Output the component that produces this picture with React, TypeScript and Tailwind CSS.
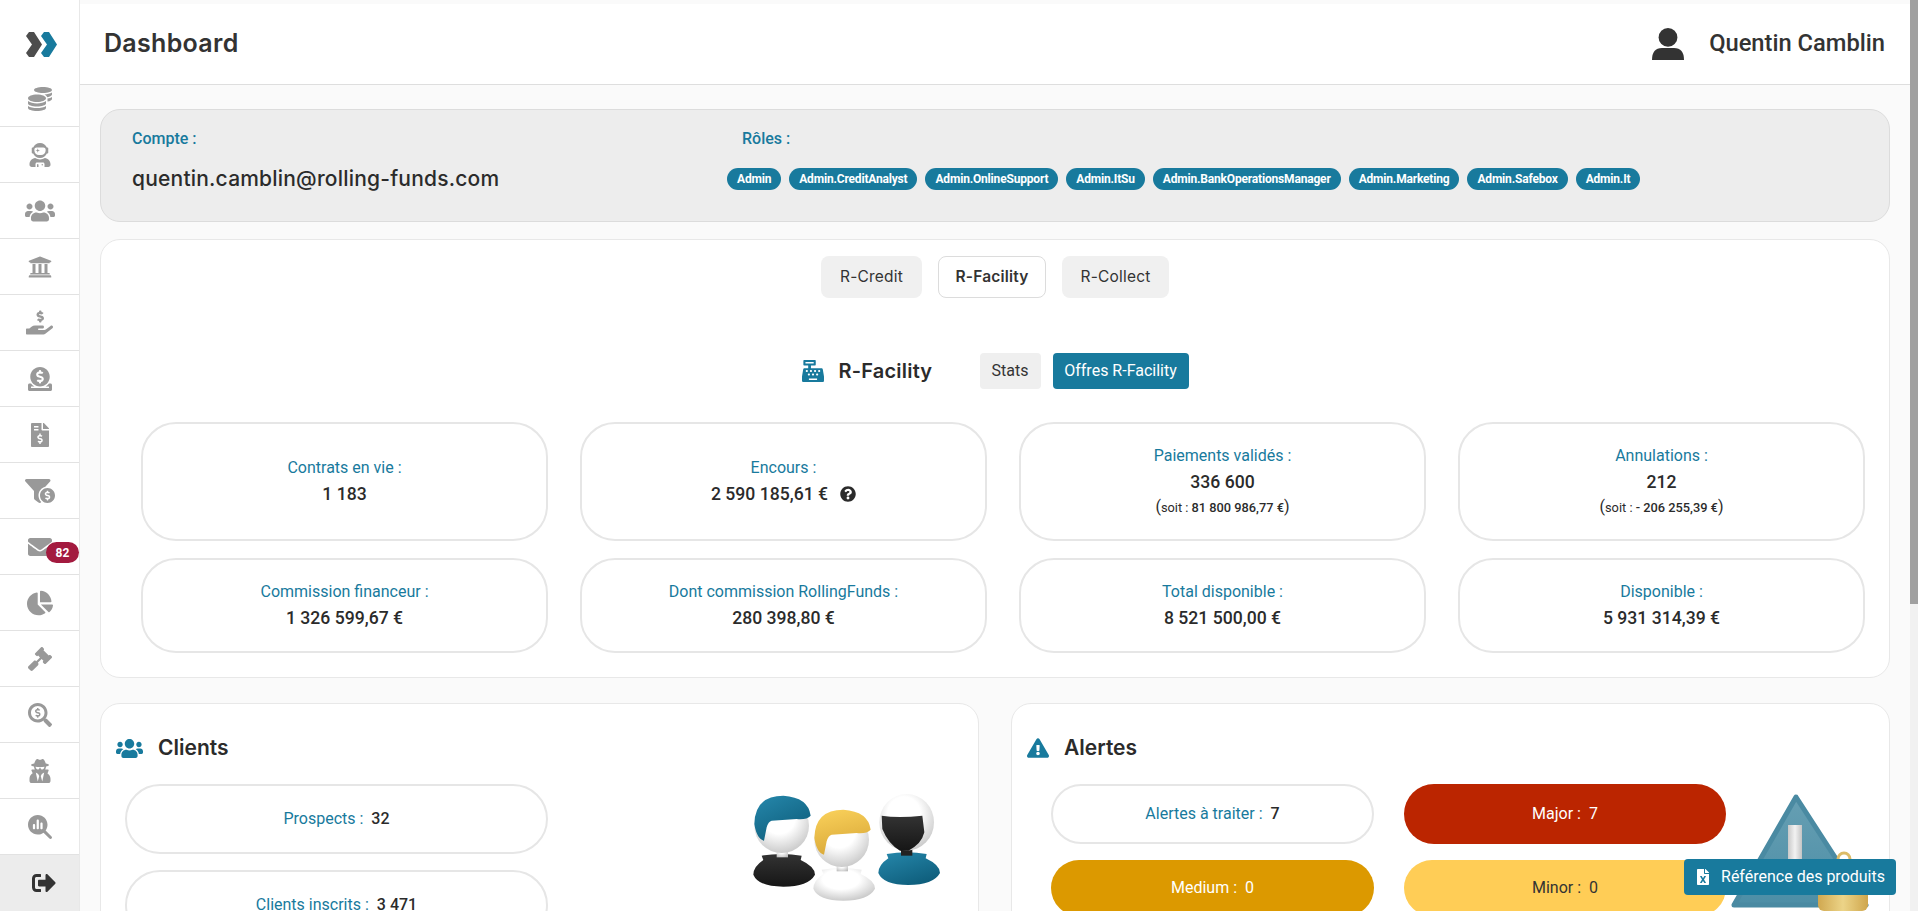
import type { ReactNode } from "react"
import {
  FaCoins,
  FaUserAstronaut,
  FaUsers,
  FaUniversity,
  FaHandHoldingUsd,
  FaDonate,
  FaFileInvoiceDollar,
  FaFunnelDollar,
  FaEnvelope,
  FaChartPie,
  FaGavel,
  FaSearchDollar,
  FaUserSecret,
  FaSignOutAlt,
  FaCashRegister,
  FaQuestionCircle,
  FaExclamationTriangle,
  FaFileExcel,
} from "react-icons/fa"
import { FaMagnifyingGlassChart } from "react-icons/fa6"

const roles = [
  "Admin",
  "Admin.CreditAnalyst",
  "Admin.OnlineSupport",
  "Admin.ItSu",
  "Admin.BankOperationsManager",
  "Admin.Marketing",
  "Admin.Safebox",
  "Admin.It",
]

const navItems = [
  { Icon: FaUserAstronaut, size: 24 },
  { Icon: FaUsers, size: 30 },
  { Icon: FaUniversity, size: 24 },
  { Icon: FaHandHoldingUsd, size: 27 },
  { Icon: FaDonate, size: 24 },
  { Icon: FaFileInvoiceDollar, size: 24 },
  { Icon: FaFunnelDollar, size: 30 },
  { Icon: FaEnvelope, size: 24 },
  { Icon: FaChartPie, size: 26 },
  { Icon: FaGavel, size: 24 },
  { Icon: FaSearchDollar, size: 24 },
  { Icon: FaUserSecret, size: 24 },
  { Icon: FaMagnifyingGlassChart, size: 24 },
]

function Logo() {
  return (
    <svg width="31" height="25" viewBox="0 0 31 25">
      <path d="M3 0 L8 0 L16 12.5 L8 25 L3 25 L0 21 L6 12.5 L0 4 Z" fill="#4d4d4d" />
      <path d="M18 0 L23 0 L31 12.5 L23 25 L18 25 L15 21 L21 12.5 L15 4 Z" fill="#187a9d" />
    </svg>
  )
}

function Sidebar() {
  return (
    <aside className="w-[80px] shrink-0 h-screen flex flex-col bg-white border-r border-[#e8e8e8]">
      <div className="h-[72px] shrink-0 flex items-center justify-center pt-4 pl-1">
        <Logo />
      </div>
      <div className="h-[55px] shrink-0 flex items-center justify-center border-b border-[#e2e2e2] text-[#999]">
        <FaCoins size={24} />
      </div>
      {navItems.map(({ Icon, size }, i) => (
        <div key={i} className="relative h-[56px] shrink-0 flex items-center justify-center border-b border-[#e2e2e2] text-[#999]">
          <Icon size={size} />
          {Icon === FaEnvelope && (
            <span className="absolute left-[46px] top-[23px] w-[33px] h-[21px] rounded-full bg-[#a31a3f] text-white text-xs font-bold flex items-center justify-center">
              82
            </span>
          )}
        </div>
      ))}
      <div className="flex-1 flex items-center justify-center bg-[#ececec] text-[#333] pl-2">
        <FaSignOutAlt size={24} />
      </div>
    </aside>
  )
}

function UserIcon() {
  return (
    <svg width="32" height="32" viewBox="0 0 32 32" fill="#333">
      <circle cx="16" cy="9.4" r="9.4" />
      <path d="M0 32 Q0 20 10 20 H22 Q32 20 32 32 Z" />
    </svg>
  )
}

function Header() {
  return (
    <header className="h-[81px] bg-white border-b border-[#dedede] flex items-center justify-between pl-6 pr-[25px]">
      <h1 className="font-['Inter'] font-semibold text-[25px] tracking-[0.3px] text-[#333]">Dashboard</h1>
      <div className="flex items-center gap-[25px] text-[#333]">
        <UserIcon />
        <span className="text-[23.7px] font-medium">Quentin Camblin</span>
      </div>
    </header>
  )
}

function AccountCard() {
  return (
    <section className="h-[113px] rounded-[20px] bg-[#ededed] border border-[#dcdcdc] flex pl-[31px] pt-[19px]">
      <div className="w-[595px]">
        <div className="text-base font-medium text-[#187a9d] h-5 leading-5">Compte :</div>
        <div className="mt-[18px] font-['Inter'] font-medium text-[21px] tracking-[0.2px] text-[#2b2b2b] leading-6">
          quentin.camblin@rolling-funds.com
        </div>
      </div>
      <div>
        <div className="pl-[15px] text-base font-medium text-[#187a9d] h-5 leading-5">Rôles :</div>
        <div className="mt-[19px] flex gap-2">
          {roles.map((r) => (
            <span key={r} className="h-[22px] px-[10px] rounded-full bg-[#187a9d] text-white text-xs font-bold tracking-[-0.18px] leading-[22px]">
              {r}
            </span>
          ))}
        </div>
      </div>
    </section>
  )
}

function StatCard({ label, value, sub, help }: { label: string; value: string; sub?: string; help?: boolean }) {
  return (
    <div className={`rounded-[35px] border-2 border-[#e6e6e6] bg-white flex flex-col items-center justify-center text-center ${sub ? "" : "pb-[2px]"}`}>
      <div className="text-base leading-[26px] text-[#187a9d]">{label}</div>
      <div className="text-[17.6px] leading-[26px] font-medium text-[#2b2b2b] flex items-center gap-3">
        {value}
        {help && <FaQuestionCircle size={16} />}
      </div>
      {sub && (
        <div className="text-[12.8px] leading-[26px] text-[#2b2b2b]">
          <span className="text-base">(</span>soit : <span className="font-medium">{sub}</span>
          <span className="text-base">)</span>
        </div>
      )}
    </div>
  )
}

function FacilityCard() {
  return (
    <section className="rounded-[20px] bg-white border border-[#e8e8e8] pt-4 pb-6 pl-10 pr-6">
      <div className="flex justify-center gap-4 text-[15.5px] tracking-[0.2px] font-['Inter'] text-[#333] -ml-4">
        <button className="w-[101px] h-[42px] rounded-lg bg-[#f0f0f0]">R-Credit</button>
        <button className="w-[108px] h-[42px] rounded-lg bg-white border border-[#dcdcdc] font-semibold">R-Facility</button>
        <button className="w-[107px] h-[42px] rounded-lg bg-[#f0f0f0]">R-Collect</button>
      </div>
      <div className="mt-[55px] h-9 flex items-center justify-center -ml-4">
        <FaCashRegister size={22} className="text-[#187a9d]" />
        <h2 className="ml-[15px] w-[141px] font-['Inter'] font-semibold text-[20px] tracking-[0.2px] text-[#2b2b2b]">R-Facility</h2>
        <button className="w-[61px] h-9 rounded bg-[#efefef] text-base text-[#333]">Stats</button>
        <button className="ml-3 w-[136px] h-9 rounded bg-[#187a9d] text-base text-white">Offres R-Facility</button>
      </div>
      <div className="mt-[33px] grid grid-cols-4 grid-rows-[119px_95px] gap-x-8 gap-y-[17px]">
        <StatCard label="Contrats en vie :" value="1 183" />
        <StatCard label="Encours :" value="2 590 185,61 €" help />
        <StatCard label="Paiements validés :" value="336 600" sub="81 800 986,77 €" />
        <StatCard label="Annulations :" value="212" sub="- 206 255,39 €" />
        <StatCard label="Commission financeur :" value="1 326 599,67 €" />
        <StatCard label="Dont commission RollingFunds :" value="280 398,80 €" />
        <StatCard label="Total disponible :" value="8 521 500,00 €" />
        <StatCard label="Disponible :" value="5 931 314,39 €" />
      </div>
    </section>
  )
}

function Panel({ icon, title, children }: { icon: ReactNode; title: string; children: ReactNode }) {
  return (
    <section className="rounded-[20px] bg-white border border-[#e8e8e8] pt-8 pl-[15px] min-h-[400px]">
      <div className="h-6 mb-6 flex items-center gap-[15px]">
        <span className="text-[#187a9d]">{icon}</span>
        <h2 className="font-['Inter'] font-semibold text-[21px] text-[#2b2b2b]">{title}</h2>
      </div>
      {children}
    </section>
  )
}

function ClientPill({ label, value }: { label: string; value: string }) {
  return (
    <div className="h-[70px] rounded-full border-2 border-[#e6e6e6] bg-white flex items-center justify-center gap-2 text-base">
      <span className="text-[#187a9d]">{label}</span>
      <span className="font-medium text-[#2b2b2b]">{value}</span>
    </div>
  )
}

// hand drawn stand-in for the 3D busts picture
function Busts() {
  const hairFront = "M43 120 Q45 35 130 35 Q205 40 212 95 Q200 108 170 105 L95 110 Q85 112 80 130 L72 170 Q50 165 43 120Z"
  const body = "M70 228 L65 215 Q125 205 185 215 L182 228 Q225 248 225 272 Q205 308 130 308 Q55 308 40 272 Q40 248 70 228Z"
  return (
    <svg width="210" height="126" viewBox="0 0 630 378" className="shrink-0">
      <defs>
        <radialGradient id="w" cx="0.45" cy="0.35" r="0.75">
          <stop offset="0.4" stopColor="#ffffff" />
          <stop offset="1" stopColor="#bdbdbd" />
        </radialGradient>
        <linearGradient id="blue" x1="0" y1="0" x2="0.6" y2="1">
          <stop offset="0" stopColor="#2688ac" />
          <stop offset="1" stopColor="#0f5f7d" />
        </linearGradient>
        <linearGradient id="yellow" x1="0.2" y1="0" x2="0.5" y2="1">
          <stop offset="0" stopColor="#f9d05a" />
          <stop offset="1" stopColor="#d9a838" />
        </linearGradient>
        <linearGradient id="black" x1="0" y1="0" x2="0" y2="1">
          <stop offset="0" stopColor="#333333" />
          <stop offset="1" stopColor="#161616" />
        </linearGradient>
      </defs>
      <g>
        <path d={body} fill="url(#black)" />
        <rect x="110" y="185" width="34" height="35" fill="url(#w)" />
        <ellipse cx="125" cy="125" rx="82" ry="82" fill="url(#w)" />
        <path d={hairFront} fill="url(#blue)" />
      </g>
      <g transform="translate(375 -5)">
        <path d={body} fill="url(#blue)" />
        <rect x="108" y="185" width="34" height="35" fill="#222" />
        <ellipse cx="125" cy="120" rx="82" ry="85" fill="url(#w)" />
        <path d="M50 100 Q100 108 172 100 L178 150 Q170 185 130 205 L105 205 Q70 185 52 140Z" fill="url(#black)" />
      </g>
      <g transform="translate(180 42)">
        <path d={body} fill="url(#w)" />
        <rect x="110" y="185" width="34" height="35" fill="url(#w)" />
        <ellipse cx="125" cy="125" rx="82" ry="82" fill="url(#w)" />
        <path d={hairFront} fill="url(#yellow)" />
      </g>
    </svg>
  )
}

// hand drawn stand-in for the warning sign picture
function WarningArt() {
  return (
    <svg width="140" height="118" viewBox="0 0 140 118" className="shrink-0 mt-[9px] ml-1">
      <defs>
        <linearGradient id="tri" x1="0" y1="0" x2="0" y2="1">
          <stop offset="0" stopColor="#669fb3" />
          <stop offset="1" stopColor="#4d8ea6" />
        </linearGradient>
        <linearGradient id="bar" x1="0" y1="0" x2="1" y2="0">
          <stop offset="0" stopColor="#c9c9c9" />
          <stop offset="0.5" stopColor="#f2f2f2" />
          <stop offset="1" stopColor="#c4c4c4" />
        </linearGradient>
        <linearGradient id="bell" x1="0" y1="0" x2="1" y2="0">
          <stop offset="0" stopColor="#d0a850" />
          <stop offset="0.5" stopColor="#ecd488" />
          <stop offset="1" stopColor="#cfa64c" />
        </linearGradient>
      </defs>
      <path d="M66 4 L136 112 L4 112 Z" fill="url(#tri)" stroke="#4a8aa2" strokeWidth="5" strokeLinejoin="round" />
      <rect x="58" y="32" width="14" height="62" fill="url(#bar)" />
      <circle cx="114" cy="66" r="6" fill="none" stroke="#dcbc68" strokeWidth="3" />
      <rect x="88" y="78" width="50" height="40" rx="6" fill="url(#bell)" />
    </svg>
  )
}

function AlertPill({ className, children }: { className: string; children: ReactNode }) {
  return <div className={`rounded-full flex items-center justify-center gap-2 text-base ${className}`}>{children}</div>
}

export default function App() {
  return (
    <div className="flex h-screen overflow-hidden bg-[#fafafa] font-['Roboto',sans-serif]">
      <Sidebar />
      <main className="flex-1 min-w-0 h-screen overflow-hidden pt-1">
        <Header />
        <div className="flex flex-col px-5 pt-6 pb-6">
          <AccountCard />
          <div className="mt-[17px]">
            <FacilityCard />
          </div>
          <div className="mt-[25px] grid grid-cols-2 gap-8">
            <Panel icon={<FaUsers size={27} />} title="Clients">
              <div className="pl-[9px] flex items-start">
                <div className="w-[423px] flex flex-col gap-4">
                  <ClientPill label="Prospects :" value="32" />
                  <ClientPill label="Clients inscrits :" value="3 471" />
                </div>
                <div className="ml-[192px]">
                  <Busts />
                </div>
              </div>
            </Panel>
            <Panel icon={<FaExclamationTriangle size={22} />} title="Alertes">
              <div className="pl-6 flex items-start">
                <div className="grid grid-cols-[323px_322px] grid-rows-[60px_56px] gap-x-[30px] gap-y-4">
                  <AlertPill className="border-2 border-[#e6e6e6] bg-white">
                    <span className="text-[#187a9d]">Alertes à traiter :</span>
                    <span className="font-medium text-[#2b2b2b]">7</span>
                  </AlertPill>
                  <AlertPill className="bg-[#bb2500] text-white">
                    <span>Major :</span>
                    <span>7</span>
                  </AlertPill>
                  <AlertPill className="bg-[#dc9900] text-white">
                    <span>Medium :</span>
                    <span>0</span>
                  </AlertPill>
                  <AlertPill className="bg-[#ffcd56] text-[#333]">
                    <span>Minor :</span>
                    <span>0</span>
                  </AlertPill>
                </div>
                <WarningArt />
              </div>
            </Panel>
          </div>
        </div>
      </main>
      {/* page scrollbar */}
      <div className="w-2 shrink-0 h-screen bg-[#f1f1f1]">
        <div className="h-[604px] bg-[#a0a0a0]" />
      </div>
      <button className="fixed right-[22px] bottom-4 w-[212px] h-9 rounded bg-[#187a9d] text-white text-base flex items-center justify-center gap-[10px]">
        <FaFileExcel size={16} />
        Référence des produits
      </button>
    </div>
  )
}
